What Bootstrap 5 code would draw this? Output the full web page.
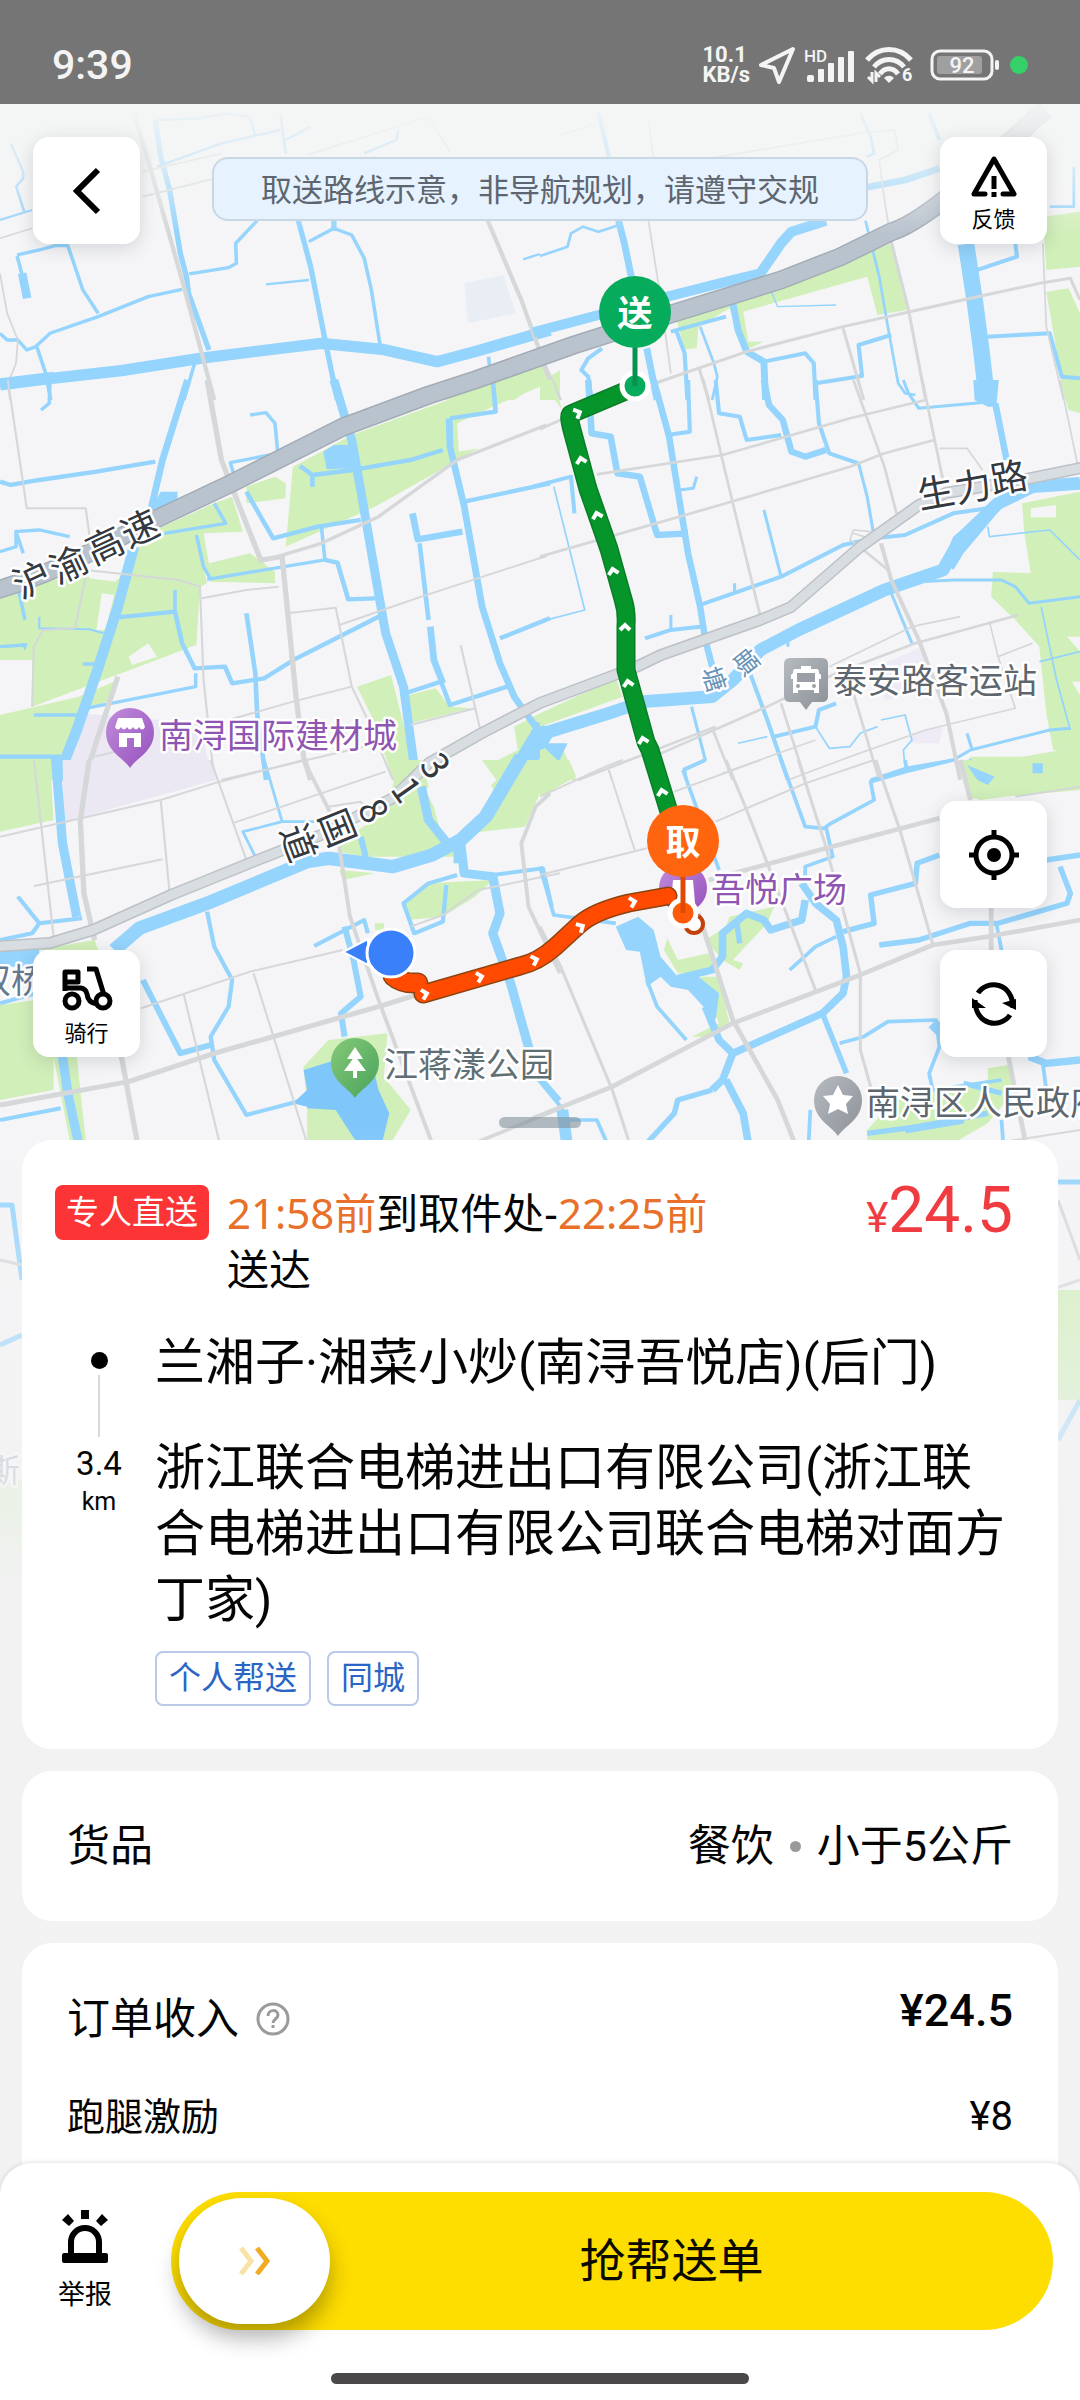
<!DOCTYPE html>
<html lang="zh-CN">
<head>
<meta charset="utf-8">
<meta name="viewport" content="width=device-width, initial-scale=1">
<title>抢帮送单</title>
<link rel="stylesheet" href="https://cdn.jsdelivr.net/npm/bootstrap@5.3.0/dist/css/bootstrap.min.css">
<style>
:root{--gutter:22px}
body{font-family:Roboto,"Noto Sans CJK SC",sans-serif;background:#f2f2f3;color:#050505}
.screen{min-height:100vh;overflow:hidden}
.status-bar{height:104px;background:#757575;color:#f4f4f4;padding:25px 52px 0}
.clock{font-size:41px;line-height:48px;font-weight:500}
.net-rate{font-size:22px;line-height:20px;font-weight:700}
.map-canvas{top:104px;left:0;width:100%;height:1496px;z-index:0}
.map-zone{height:1036px;padding:33px 33px 83px;z-index:1}
.float-btn{width:107px;height:107px;border:0;border-radius:16px;background:#fff;color:#000;box-shadow:0 4px 18px rgba(40,50,60,.16);font-size:22px;line-height:28px;padding:0}
.float-btn.flex-column{padding-top:6px}
.side-stack{gap:42px}
.route-tip{width:656px;height:64px;margin-top:20px;padding-top:4px;border:2px solid #c9d7e4;border-radius:16px;background:#e6f2fe;color:#5d6670;font-size:31px}
.grabber{width:82px;height:11px;border-radius:6px;background:rgba(130,145,155,.6);bottom:12px;left:50%;transform:translateX(-50%)}
.sheet{padding:0 var(--gutter);gap:22px;z-index:1}
.panel{background:#fff;border-radius:30px;padding:0 45px}
.panel-order{padding:45px 33px 43px}
.tag-direct{background:#fd3436;color:#fff;border-radius:8px;font-size:33px;line-height:55px;padding:0 11px}
.deadline{font-family:"Noto Sans","Noto Sans CJK SC",sans-serif;font-size:42px;line-height:56px;width:520px;margin-left:18px}
.deadline b{font-weight:400;color:#e8702a}
.price{color:#f03c40;font-size:64px;line-height:52px;margin-right:12px}
.price small{font-size:42px}
.stops{margin-top:33px}
.rail{width:88px;padding-top:22px}
.rail-dot{width:17px;height:17px;border-radius:50%;background:#000}
.rail-line{width:2px;height:62px;background:#d9d9d9;margin:6px 0 8px}
.dist{font-size:33px;line-height:38px}
.dist-unit{font-size:25px;line-height:38px}
.stop-text{margin:0 12px}
.stop-name{font-size:50px;line-height:66px;margin:0;font-weight:400}
.stop-name + .stop-name{margin-top:39px}
.stop-tag{font-size:32px;line-height:51px;padding:0 12px;border:2px solid #b9cae8;border-radius:8px;color:#2a65c6}
.tags{gap:16px;margin-top:18px}
.row-goods{height:150px;font-size:43px}
.sep{width:11px;height:11px;border-radius:50%;background:#999;margin:0 16px}
.row-total{font-size:43px;line-height:66px;padding-top:43px}
.row-total span:last-child{font-size:45px;font-weight:500;margin-top:-8px}
.row-bonus{font-size:38px;line-height:56px;margin-top:37px;padding-bottom:30px}
.row-bonus span:last-child{font-size:40px}
.panel-income{border-radius:30px 30px 0 0}
.dock{background:#fff;border-radius:32px 32px 0 0;margin-top:-24px;padding:29px 27px 16px 45px;box-shadow:0 -1px 4px rgba(0,0,0,.12);z-index:2}
.report{border:0;background:none;width:80px;font-size:27px;line-height:36px;padding:17px 0 0;color:#000}
.report svg{margin-bottom:14px}
.slide-track{height:138px;border:0;border-radius:69px;background:#fedd00;font-size:46px;margin-left:46px;padding:0 8px;color:#0a0a00}
.slide-knob{width:151px;height:126px;border-radius:63px;background:#fff;box-shadow:0 14px 22px rgba(0,0,0,.3)}
.slide-label{padding-right:32px}
.home-bar{width:418px;height:11px;border-radius:6px;background:#4a4849;margin:43px 0 0 -18px}
.gn{fill:#d1efb9}.wt{fill:none;stroke:#94d4fd;stroke-linejoin:round}.wf{fill:#94d4fd}
.rd{fill:none;stroke:#d5d7d8;stroke-linejoin:round}.vi{fill:#ebe8f3}.ld{fill:#f5f5f7}
.lbl{font:400 34px "Noto Sans CJK SC",sans-serif;paint-order:stroke;stroke:#fff;stroke-width:5px;stroke-linejoin:round}
.rl{font-size:37px;fill:#33393f;text-anchor:middle}
.river{font-size:25px}.far{font-size:32px}
.pin-t{font:700 35px "Noto Sans CJK SC",sans-serif;fill:#fff;text-anchor:middle}
</style>
<script src="https://cdn.jsdelivr.net/npm/bootstrap@5.3.0/dist/js/bootstrap.bundle.min.js"></script>
</head>
<body>
<div class="screen position-relative d-flex flex-column">

<header class="status-bar d-flex align-items-center justify-content-between flex-shrink-0">
  <div class="clock">9:39</div>
  <div class="d-flex align-items-center">
    <div class="net-rate">10.1<br>KB/s</div>
    <svg class="ms-2" width="38" height="40" viewBox="0 0 38 40" fill="none" stroke="#f4f4f4" stroke-width="4" stroke-linejoin="round"><path d="M35 4 3 20l13 3 5 14z"/></svg>
    <svg class="ms-2" width="52" height="38" viewBox="0 0 52 38" fill="#f4f4f4"><text x="0" y="16" font-size="17" font-weight="500" font-family="Roboto">HD</text><rect x="3" y="29" width="7" height="7" rx="2"/><rect x="14" y="23" width="6" height="13" rx="1"/><rect x="24" y="17" width="6" height="19" rx="1"/><rect x="34" y="11" width="6" height="25" rx="1"/><rect x="44" y="5" width="6" height="31" rx="1"/></svg>
    <svg class="ms-2" width="54" height="42" viewBox="0 -2 54 42" fill="none" stroke="#f4f4f4" stroke-width="5"><path d="M3 14C15 0 35 0 47 14M10 21c8-10 22-10 30 0"/><path d="M16 28c5-7 13-7 18 0"/><path d="m20 32c3-3 7-3 10 0l-5 5z" fill="#f4f4f4" stroke="none"/><path d="M4 31l4 4v-9M12 36v-9l4 4" stroke-width="3"/><text x="38" y="35" font-size="18" font-weight="700" font-family="Roboto" fill="#f4f4f4" stroke="none">6</text></svg>
    <svg class="ms-2 ps-1" width="74" height="32" viewBox="0 0 70 32"><rect x="2" y="2" width="60" height="28" rx="8" fill="none" stroke="#f4f4f4" stroke-width="3"/><rect x="7" y="7" width="45" height="18" rx="3" fill="#a0a0a0"/><rect x="65" y="11" width="4" height="10" rx="2" fill="#f4f4f4"/><text x="32" y="24" text-anchor="middle" font-size="22" font-weight="500" font-family="Roboto" fill="#f4f4f4">92</text></svg>
    <svg class="ms-2" width="20" height="20" viewBox="0 0 20 20"><circle cx="11" cy="10" r="9" fill="#35d168"/></svg>
  </div>
</header>

<svg class="map-canvas position-absolute" viewBox="0 104 1080 1496" preserveAspectRatio="xMidYMin slice" role="img" aria-label="取送路线地图">
<defs>
  <linearGradient id="fadeTop" x1="0" y1="0" x2="0" y2="1"><stop offset="0" stop-color="#f4f5f5" stop-opacity=".95"/><stop offset=".5" stop-color="#f4f5f5" stop-opacity=".65"/><stop offset="1" stop-color="#f4f5f5" stop-opacity="0"/></linearGradient>
  <linearGradient id="fadeBot" x1="0" y1="0" x2="0" y2="1"><stop offset="0" stop-color="#f2f2f3" stop-opacity="0"/><stop offset="1" stop-color="#f2f2f3"/></linearGradient>
  <linearGradient id="pv" x1="0" y1="0" x2="1" y2="1"><stop offset="0" stop-color="#c08ddb"/><stop offset="1" stop-color="#9650bd"/></linearGradient>
  <linearGradient id="pg" x1="0" y1="0" x2="1" y2="1"><stop offset="0" stop-color="#86c979"/><stop offset="1" stop-color="#48a35a"/></linearGradient>
  <linearGradient id="ps" x1="0" y1="0" x2="1" y2="1"><stop offset="0" stop-color="#b6bbc0"/><stop offset="1" stop-color="#8b9197"/></linearGradient>
  <path id="drop" d="M0 36C-6 26-24 20-24 0a24 24 0 0 1 48 0C24 20 6 26 0 36z"/>
  <path id="chev" d="M-5 3 0-2l5 5" fill="none" stroke="#fff" stroke-width="4"/>
</defs>
<rect y="104" width="1080" height="1496" fill="#f5f5f7"/>

<!-- north west -->
<g transform="translate(0 100) scale(.3571 .3333)">
  <path class="gn" d="M1200 900L1520 785 1568 900V810L1440 900z"/>
  <path d="M1300 550L1410 525 1445 640 1310 670z" fill="#e9eef5"/>
  <path class="wt" stroke-width="34" d="M0 855L120 838 340 812 560 775 900 730 1070 748 1225 785 1330 755 1540 690"/>
  <path class="wt" stroke-width="15" d="M435 60L450 170 475 270 505 460 522 530 528 580 565 690 585 750M835 360L870 500 912 730 945 900M935 360V390"/>
  <path class="wt" stroke-width="24" d="M62 520L76 595"/>
  <path class="wt" stroke-width="10" d="M48 468L62 525M48 465L110 450 155 437 190 437 232 570 275 640M0 700L20 720 50 720 75 750 100 740 140 700 275 650 415 590 510 568M103 740L128 820 142 900M545 790L515 900M530 522L640 503 662 490 660 430 720 362M865 425L935 385 985 405 1020 475 1040 570 1065 740M1368 770L1382 900"/>
  <path class="wt" stroke-width="7" d="M30 130L65 215 65 235 45 260 68 335M0 360L90 330M745 553L865 540M1465 478L1512 462M440 200L620 130 785 90M785 40L800 160M800 120L870 80M440 60L560 55 630 40 700 50 715 105M1115 90L1110 120 1020 160"/>
  <path class="rd" stroke-width="12" d="M375 40L420 200 515 560 600 900M1365 360L1460 600 1510 750 1540 860"/>
  <path class="rd" stroke-width="5" d="M400 215L620 160M400 290L620 230M0 415L90 385M0 520L20 640 50 720 45 790 22 850 28 900M1200 50L1260 155M860 165L1200 50"/>
</g>
<!-- north east -->
<g transform="translate(540 100) scale(.3444 .3333)">
  <path class="gn" d="M395 655L960 455 1020 430 1065 630 980 645 950 530 590 635 605 725 650 725 600 748 550 625 460 680 455 745 420 748zM1460 350L1568 335V500L1470 510zM1470 575L1535 565 1568 640V900H1525zM0 790L50 900H0z"/>
  <path class="wt" stroke-width="30" d="M-20 697L170 645 370 590 560 540 640 520 700 430 730 395 830 362"/>
  <path class="wt" stroke-width="48" d="M1237 432L1262 600 1280 740 1298 900"/>
  <path class="wt" stroke-width="20" d="M950 262L1060 240 1160 205M228 362L245 430 265 530M310 745L340 900M560 610L575 690 600 755 650 785 655 900"/>
  <path class="wt" stroke-width="12" d="M1130 40L1160 120M170 40L200 170M180 745L140 775 120 810 140 830 150 900M380 695L540 650M395 690L420 760 428 900M650 785L770 760 795 790 800 900M800 850L935 828 925 735 1020 705M1270 510L1385 470 1380 430M1300 710L1480 700 1515 830 1568 835"/>
  <path class="wt" stroke-width="8" d="M0 468L80 440 90 400 125 380 170 395 230 375M465 680L505 790 515 830 500 900M945 362L985 530 1010 680 1040 850 1060 880 1090 885M950 170L970 160 960 110 930 40M1480 320H1550V200"/>
  <path class="wt" stroke-width="4" d="M670 570L690 620 860 615"/>
  <path class="rd" stroke-width="9" d="M1020 425L1070 630 1120 900M320 855L600 755 880 680 1250 595 1460 548 1540 535 1568 600M880 685L940 900M462 805L490 900M0 760L60 900"/>
  <path class="rd" stroke-width="5" d="M315 60L330 175M315 362L345 560 380 820M60 105L150 75M490 175L940 98 1030 90 1040 150 985 180 1000 300 1020 425M1460 430L1470 680 1520 900"/>
</g>
<!-- west -->
<g transform="translate(0 380) scale(.3571 .3333)">
  <path class="gn" d="M985 165L1370 15 1512 0 1512 20 1380 80 1280 130 1285 215 1340 205 1200 290 1050 380 800 500 820 260 900 215zM690 320L770 290 800 310 800 355 690 370zM380 510L480 470 550 465 580 610 560 620 550 795 90 980 90 840 0 840 0 650 240 570 330 600zM445 445L600 370 650 350 680 455 570 460 585 550 700 520 770 575 770 610 590 605 550 475 380 510zM0 1005L220 950 330 900 310 960 240 990 170 1200 0 1200zM1000 920L1095 885 1170 1200 1100 1200 1050 1030zM1145 945L1220 925 1260 980 1320 985 1150 1030zM1512 1000L1440 1040 1450 1110 1340 1170 1340 1200 1512 1200z"/>
  <path class="ld" d="M285 640L320 645 295 750 270 750zM360 830L415 790 440 830 370 855zM240 570L330 580 325 605 250 595z"/>
  <path class="vi" d="M225 1000L560 1030 595 1200 175 1200z"/>
  <path class="wt" stroke-width="30" d="M0 10L150-10M375 500L330 680 270 880 215 1050 160 1200"/>
  <path class="wt" stroke-width="25" d="M935 0L985 180 1010 330 1060 640 1080 760 1130 920 1165 1200"/>
  <path class="wt" stroke-width="19" d="M525 0L490 120 455 240 420 400M1258 115L1260 200 1300 380 1350 680 1400 850 1440 950 1500 1040M1155 400L1170 478 1295 455M1205 740L1215 840 1240 910"/>
  <path class="wt" stroke-width="60" d="M1530 1040L1490 1110 1440 1200"/>
  <path class="wf" d="M415 400L450 335H497V370L470 385zM905 215L935 195H990V265L915 268zM60 790h18l-8 22z"/>
  <path class="wt" stroke-width="13" d="M0 305L30 315 110 300 270 275 435 245M690 335L730 410 765 475 890 440 1010 420M840 258L875 285 990 270 1150 240 1240 210M875 320V285M1380 0L1388 95 1260 115M1300 365L1540 310M1400 775L1540 715M910 540L945 548 975 658 1050 655M1175 490L1200 720M1135 940L1235 905 1260 975 1420 920M330 712L490 695 510 790 545 865 630 860 650 910 740 895 830 835 1070 705M690 700L715 880 720 1000 745 1200M0 1130H170"/>
  <path class="wt" stroke-width="10" d="M140 0L138 70 115 90M40 455L110 450 195 470M0 515L45 500 45 455 65 520M50 620L70 720M700 105L745 98 770 130 778 220 645 248 655 285M900 440L910 540 580 598M550 465L570 560 590 598M600 370L632 430 460 460M490 695V630M548 880V920L240 985M95 1005H215M0 800L70 795M232 852H270"/>
  <path class="wt" stroke-width="6" d="M110 710V745L250 748 290 760"/>
  <path class="rd" stroke-width="15" d="M580 0L620 240 660 350 730 540 790 530 830 960 850 1130 870 1200M330 890L235 1200"/>
  <path class="rd" stroke-width="10" d="M730 545L900 490 1060 410 1280 240 1530 135"/>
  <path class="rd" stroke-width="6" d="M22 0L75 385 240 385 255 500M240 570L500 600 560 620 570 900 600 1200M565 655L690 630 780 620M240 590L210 745M90 980L95 800 120 750 210 745M805 700L940 683 985 920 1030 1020 1100 1200M950 735L1180 650 1530 528M640 1020L820 965 985 920M1290 795L1345 1050M1150 1035L1330 985M620 1200L1100 1080M265 1130L420 1090"/>
</g>
<!-- east -->
<g transform="translate(540 380) scale(.3444 .3333)">
  <path class="gn" d="M1400 370L1568 335V1120L1490 1110 1470 1000 1450 800 1380 720 1310 650 1315 575 1425 580 1405 450zM1240 1200L1250 1130 1400 1130 1568 1100V1200zM0 1000L220 895 240 950 0 1040zM0 1110L60 1090 105 1200H0zM1510 0H1568V100L1535 90zM0 0H35L65 90z"/>
  <path class="ld" d="M1425 385L1498 375V412H1425zM1530 770H1568V815zM1545 905H1568V945z"/>
  <path d="M1000 850L1110 800 1130 930 1000 960zM1080 1060L1170 1040 1160 1090 1080 1090z" fill="#efebf6"/>
  <path class="wt" stroke-width="38" d="M-20 1070L200 1000 300 965 500 950 560 900 640 810 750 750 1000 630 1170 570 1220 480 1330 370 1430 320 1568 310"/>
  <path class="wf" d="M1170 540L1200 470 1300 380 1360 360 1230 520 1200 570zM0 1090H80L55 1145zM1258 0H1332L1325 80H1300L1262 60z"/>
  <path class="wt" stroke-width="19" d="M1322 70L1355 240M140 0L150 160 205 170 225 280 290 290 340 465 430 460M330 0L375 170 400 330 430 520 465 680 480 780 500 860M650 0L665 75 705 120 730 215 770 230 830 210"/>
  <path class="wt" stroke-width="12" d="M-20 320L90 290 100 400M430 0L435 155 370 165M510 0L520 100 580 110 600 180 700 165M800 0L810 130 840 220 925 250M465 675L700 590 880 495 970 475 1060 465 1200 400 1300 385M305 775L380 750 465 740M680 1070L800 1040 810 990 860 970M610 880L660 1020 720 1200"/>
  <path class="wt" stroke-width="9" d="M925 250L950 350 970 470M455 290L445 325 405 330M1055 0L1070 40 1100 85 1310 65M650 390L700 590M380 705V750M565 610V640M720 775V800M1100 605L1200 600 1340 600 1380 620 1420 670 1568 650M1020 640L1080 790M440 980L480 1140 420 1170 425 1200M960 1200L1060 1165 1200 1140 1250 1110 1480 1050 1540 1045M1240 1060L1255 1110"/>
  <path class="wt" stroke-width="5" d="M0 725L130 690 40 320M1300 440L1305 470 1480 450 1568 540M1455 680L1500 900 1540 1050M1450 845L1568 815M575 1090L660 1070M800 1040L840 1105 900 1100 930 1060 980 1040M990 1020L1060 1005 1080 1080 1055 1110 1060 1160"/>
  <path class="wf" d="M1245 1135L1275 1150 1320 1180 1290 1200H1250zM1430 1150h30v30h-30z"/>
  <path class="rd" stroke-width="12" d="M990 490L1020 600 1100 780 1180 1000 1220 1200"/>
  <path class="rd" stroke-width="8" d="M475 0L525 220 560 370 640 710M910 0L1000 260 1035 400M1110 0L1150 200 1170 300M165 283L530 225 900 115 1120 60M0 530L540 370 900 260 1000 220 1145 180M0 148L70 115M330 1130L660 980 860 880 1090 790 1390 705M500 1045L560 1200M700 970L770 1200M910 940L985 1200M110 1200L510 1040M940 510L1010 570"/>
  <path class="rd" stroke-width="5" d="M1160 205H1240L1285 270M1510 0L1560 250M840 860L1080 740 1220 710M960 455L910 450 900 480 930 500 940 470 910 460M1305 725L1330 830 1380 985 1120 1050 900 1130 720 1200M1330 830L1430 790M530 1180L800 1080M200 1170L208 1200"/>
</g>
<!-- south west -->
<g transform="translate(0 760) scale(.3571 .3333)">
  <path class="gn" d="M0 0H140L150 180 0 215zM0 735L100 720 150 720V990L0 1020zM1110 0H1180L1240 240 1300 290H1020L950 275 945 250 1090 150zM1330 0H1512V100L1470 200 1310 220 1400 120zM950 330L1050 340 960 360zM1140 480L1130 430 1200 370 1380 360 1330 410 1240 470zM920 840L1085 820 1075 950 1150 1050 1100 1140H860V1040L850 920zM100 570L265 540 275 570zM150 890L215 890 240 1140H195zM1050 490h25v20h-25z"/>
  <path class="vi" d="M175 0H590L605 60 180 185z"/>
  <path class="ld" d="M1190 90L1290 0H1350L1390 60 1330 120 1280 130 1280 200 1250 210z"/>
  <path class="wt" stroke-width="40" d="M320 570L390 505 580 430 860 305 920 295 1100 320 1210 285 1290 240 1360 170 1460-10"/>
  <path class="wt" stroke-width="60" d="M0 590H110M1270 280H1300"/>
  <path class="wt" stroke-width="26" d="M155-10L175 250 215 470M1180 80L1200 180 1260 260M1290 250L1300 340 1380 350 1400 460 1380 520 1430 670 1485 880M175 890L190 1000 220 1150"/>
  <path class="wt" stroke-width="17" d="M965 500L990 600 1010 710 955 760 965 830M400 660L505 880 590 855M1010 230L1025 295"/>
  <path class="wt" stroke-width="12" d="M230 475L110 490 50 410M110 490L90 520 0 540M1380 345L1520 325 1545 440M1280 345L1200 370 1130 430 1160 520 1240 485 1250 375M580 455L600 560 650 660 640 740 590 830 600 900 690 1065 850 1020M880 558L1020 480 1030 520M0 1080L170 1045M1520 960L1568 1020M0 730L100 700"/>
  <path class="wt" stroke-width="8" d="M740 0L790 185 680 215 715 290M790 185H880"/>
  <path d="M850 930L940 900H1040L1060 990 1090 1060 1070 1150H1000L940 1050 860 1045V1075 1040L820 1030 860 990z" fill="#7fc6fb"/>
  <path class="rd" stroke-width="15" d="M250 0L225 180 235 400 265 540M340 890L385 1150M0 1035L360 965 600 880 1060 740 1180 700"/>
  <path class="rd" stroke-width="11" d="M850 0L940 190 980 470 1060 720 1210 1150M1540 100L1500 140 1460 250 1480 440 1568 640M1340 1145L1568 1045"/>
  <path class="rd" stroke-width="6" d="M0 230L450 120 600 70 850 0M450 120L475 400M95 0L150 530M95 378L455 298M590 0L690 300M650 190L1080 35M920 140L1010 125 1030 150M395 745L700 635 960 570M515 705L615 1150M710 640L860 1150M1150 500L1240 465 1340 390 1568 340"/>
</g>
<!-- south east -->
<g transform="translate(540 760) scale(.3444 .3333)">
  <path class="gn" d="M0 0H85L105 50 0 110zM1225 0H1568V90L1350 110 1280 120 1240 110zM370 535L400 600 490 580 510 640 400 640 360 570zM465 650L520 650 550 790 480 830 440 830 520 790zM480 540L540 500 550 470 680 440 660 490 560 600 590 610 580 630 530 600zM950 1110L1030 1020 1300 960 1300 925 1360 915 1380 990 1300 1090 1200 1150 950 1150z"/>
  <path class="wf" d="M220 500L285 470 330 510 350 590 400 650 460 650 520 700 510 780 430 690 380 680 350 650 310 680 290 575 250 570zM1240 15L1320 50 1300 75 1270 60zM1430 10h30v30h-30z"/>
  <path class="wt" stroke-width="22" d="M400 655L500 630 530 590 530 520 600 460 650 480 670 510 760 480 770 420M760 370L800 430 860 480 880 560 890 650 880 700 820 760 560 880 530 960 500 990M480 740L520 840 560 880M540 960L590 1060 605 1150M1420 890L1470 910 1568 900M1060 1110L1230 1080"/>
  <path class="wt" stroke-width="16" d="M500 990L400 1020 390 1060 310 1150M880 515L970 490 960 405 1090 370 1095 310 1160 285M820 760L890 940M985 555L1100 540 1250 490 1330 490 1530 430 1540 400 1510 320M1470 300L1568 285M950 1120L1100 1100 1300 1060M1230 970L1340 1000M570 480L580 550"/>
  <path class="wt" stroke-width="11" d="M0 320L40 465 220 490M310 660L340 740 425 840M700 0L770 200 825 205 845 190 970 120 960 65 1060 35 1200 0M830 200L850 290 770 320 770 370M725 630L800 560 860 530M1325 490L1340 570M870 850L940 830 1010 785 1150 780 1160 860 1130 940 1140 990 1340 960M1460 910L1470 990M1340 1080L1345 1150M780 1150L785 1050M415 30L520 330M1060 0L1065 30M415 30L480 0M-20 940L60 1040 80 1080 165 1080 195 1150"/>
  <path class="wt" stroke-width="34" d="M65 1050L78 1150M1140 790L1180 830"/>
  <path class="rd" stroke-width="14" d="M460 460L560 780 690 1020 740 1150M-20 1075L210 980 560 790 930 645 1140 555 1300 530 1568 480M490 360L830 265 1160 175M1310 440V570M1360 890L1410 1150M1220 0L1250 120"/>
  <path class="rd" stroke-width="9" d="M540 0L600 150 660 310 800 690M750 0L830 260 930 640 930 870 960 980M975 0L1045 210 1140 550M0 500L60 620 210 990 260 1150"/>
  <path class="rd" stroke-width="6" d="M0 345L310 265M200 30L275 270M390 95L640 0M510 185L770 70 970 0M0 110L190 20 240 0M1350 1145L1568 1110M1380 110L1568 80"/>
</g>
<!-- strip under the sheet edges -->
<path class="gn" d="M1058 1290H1080V1400H1058zM0 1480H22V1620H0z"/>
<path class="wt" stroke-width="5" d="M0 1205H12L22 1280M0 1345 22 1335M1080 1182H1050M1080 1400 1058 1440"/>
<path class="rd" stroke-width="3" d="M1058 1200 1080 1260M1050 1290 1080 1280M0 1260 22 1265"/>

<!-- trunk roads -->
<g fill="none" stroke-linejoin="round">
  <path d="M1045 110L1000 150 Q970 180 940 203T891 232L840 257 781 280 671 314 574 345 475 380 429 395 343 427 232 483 154 520 89 553Q40 578-10 592" stroke="#a3acb6" stroke-width="19"/>
  <path d="M1045 110L1000 150 Q970 180 940 203T891 232L840 257 781 280 671 314 574 345 475 380 429 395 343 427 232 483 154 520 89 553Q40 578-10 592" stroke="#b9c3ce" stroke-width="16"/>
  <path d="M1090 466L1022 480 946 493 919 505 860 547 791 607 760 620 661 655 636 667 540 703 482 733 429 763 393 798 321 835 250 863 171 895 93 930 50 943-10 947" stroke="#bcc1c6" stroke-width="12"/>
  <path d="M1090 466L1022 480 946 493 919 505 860 547 791 607 760 620 661 655 636 667 540 703 482 733 429 763 393 798 321 835 250 863 171 895 93 930 50 943-10 947" stroke="#d8dde2" stroke-width="9"/>
</g>

<!-- place labels -->
<g class="lbl">
  <g class="rl">
    <text transform="translate(32 580) rotate(-25)" y="13">沪</text><text transform="translate(69 565) rotate(-25)" y="13">渝</text><text transform="translate(105 546) rotate(-25)" y="13">高</text><text transform="translate(140 529) rotate(-25)" y="13">速</text>
    <text transform="translate(936 493) rotate(-10)" y="13">生</text><text transform="translate(973 487) rotate(-10)" y="13">力</text><text transform="translate(1009 478) rotate(-10)" y="13">路</text>
    <text transform="translate(435 766) rotate(55)" y="13">3</text><text transform="translate(406 790) rotate(55)" y="13">1</text><text transform="translate(373 811) rotate(62)" y="13">8</text><text transform="translate(337 828) rotate(68)" y="13">国</text><text transform="translate(298 843) rotate(70)" y="13">道</text>
  </g>
  <g class="river" fill="#6893b8" text-anchor="middle"><text transform="translate(746 662) rotate(52)" y="9">頔</text><text transform="translate(714 679) rotate(72)" y="9">塘</text></g>
  <text x="159" y="748" fill="#8f55b2">南浔国际建材城</text>
  <text x="833" y="693" fill="#5d666e">泰安路客运站</text>
  <text x="384" y="1077" fill="#5f6f74">江蒋漾公园</text>
  <text x="711" y="902" fill="#8f55b2">吾悦广场</text>
  <text x="866" y="1115" fill="#5d666e">南浔区人民政府</text>
  <text x="-23" y="993" fill="#66788e">双桥</text>
  <text x="-12" y="1482" fill="#98a5b5" class="far">斯</text>
</g>

<!-- poi pins -->
<g transform="translate(130 732)"><use href="#drop" fill="url(#pv)"/><path d="M-12-14h24l3 9q-3 5-6 0-3 5-6 0-3 5-6 0-3 5-6 0-3 5-6 0zM-11 1h22v14H4V6h-7v9h-8z" fill="#fff"/></g>
<g transform="translate(806 680)"><path d="M-16-22h32q6 0 6 6v32q0 6-6 6H6l-6 8-6-8h-10q-6 0-6-6v-32q0-6 6-6z" fill="url(#ps)"/><path d="M-5-14H5v3h6q2 0 2 4l2 2v4h-2v14H8v-3H-8v3h-5V-1h-2v-4l2-2q0-4 2-4h6z" fill="#fff"/><path d="M-9-7H9V2H-9z" fill="#9aa0a6"/><circle cx="-8" cy="6" r="2" fill="#9aa0a6"/><circle cx="8" cy="6" r="2" fill="#9aa0a6"/></g>
<g transform="translate(355 1062)"><use href="#drop" fill="url(#pg)"/><path d="M0-15 8-3H-8zM0-6 11 9H2v7h-4V9h-9z" fill="#fff"/></g>
<g transform="translate(838 1100)"><use href="#drop" fill="url(#ps)"/><path d="M0-15 5-5 15-4 8 4 10 14 0 9-10 14-8 4-15-4-5-5z" fill="#fff"/></g>
<circle cx="683" cy="888" r="24" fill="url(#pv)"/><path d="M673 880h20l3 34h-26z" fill="#fff"/>

<!-- delivery leg -->
<g fill="none" stroke-linejoin="round">
  <path d="M635 387L571 414Q568 415 572 430L588 489 609 549 623 599Q627 611 626 626V670L638 713 646 742 650 750 670 815" stroke="#0a7d28" stroke-width="19"/>
  <path d="M635 387L571 414Q568 415 572 430L588 489 609 549 623 599Q627 611 626 626V670L638 713 646 742 650 750 670 815" stroke="#06952b" stroke-width="16"/>
  <path d="M393 976Q402 984 418 983" stroke="#8c4310" stroke-width="21" stroke-linecap="round"/>
  <path d="M423 994L520 966Q538 962 555 947L580 924Q595 911 629 903L668 896" stroke="#8c4310" stroke-width="19" stroke-linecap="round"/>
  <path d="M393 976Q402 984 418 983" stroke="#ff4a00" stroke-width="18" stroke-linecap="round"/>
  <path d="M423 994L520 966Q538 962 555 947L580 924Q595 911 629 903L668 896" stroke="#ff4a00" stroke-width="16" stroke-linecap="round"/>
</g>
<use href="#chev" transform="translate(578 413) rotate(65)"/><use href="#chev" transform="translate(581 460) rotate(-12)"/><use href="#chev" transform="translate(597 515) rotate(-15)"/><use href="#chev" transform="translate(613 571) rotate(-12)"/><use href="#chev" transform="translate(625 627)"/><use href="#chev" transform="translate(628 683) rotate(-10)"/><use href="#chev" transform="translate(643 740) rotate(-12)"/><use href="#chev" transform="translate(662 792) rotate(-12)"/>
<use href="#chev" transform="translate(425 994) rotate(76)"/><use href="#chev" transform="translate(480 977) rotate(76)"/><use href="#chev" transform="translate(535 960) rotate(72)"/><use href="#chev" transform="translate(581 927) rotate(60)"/><use href="#chev" transform="translate(633 902) rotate(76)"/>
<path d="M343 952l25-13v26z" fill="#3a80fb" stroke="#fff" stroke-width="2"/><circle cx="391" cy="953" r="24" fill="#3a80fb" stroke="#fff" stroke-width="3"/>

<circle cx="635" cy="386" r="13" fill="#06ab5c" stroke="#fff" stroke-width="5"/><path d="M635 340V386" stroke="#089150" stroke-width="5"/><circle cx="635" cy="312" r="36" fill="#06ab5c"/><text class="pin-t" x="635" y="326">送</text>
<circle cx="694" cy="924" r="9" fill="#fff" stroke="#c2410c" stroke-width="4"/><circle cx="683" cy="913" r="13" fill="#ff5a0a" stroke="#fff" stroke-width="5"/><path d="M683 875V913" stroke="#e14a05" stroke-width="5"/><circle cx="683" cy="841" r="36" fill="#ff640f"/><text class="pin-t" x="683" y="855">取</text>

<rect y="104" width="1080" height="130" fill="url(#fadeTop)"/>
<rect y="1120" width="1080" height="480" fill="url(#fadeBot)"/>
</svg>

<section class="map-zone position-relative d-flex flex-column justify-content-between flex-shrink-0">
  <div class="d-flex justify-content-between align-items-start">
    <button type="button" class="float-btn d-flex align-items-center justify-content-center" aria-label="返回"><svg width="40" height="50" viewBox="0 0 40 50" fill="none" stroke="#000" stroke-width="6"><path d="M31 4 10 25l21 21"/></svg></button>
    <div class="route-tip d-flex align-items-center justify-content-center">取送路线示意，非导航规划，请遵守交规</div>
    <button type="button" class="float-btn d-flex flex-column align-items-center justify-content-center"><svg class="mb-2" width="50" height="44" viewBox="0 0 50 44" fill="none" stroke="#000" stroke-width="5" stroke-linejoin="round" stroke-linecap="round"><path d="M16 40H5L25 5l20 35H34"/><path d="M25 22v13M25 38v5" stroke-linecap="butt"/></svg>反馈</button>
  </div>
  <div class="d-flex justify-content-between align-items-end">
    <button type="button" class="float-btn d-flex flex-column align-items-center justify-content-center"><svg class="mb-2" width="54" height="46" viewBox="0 0 54 46" fill="none" stroke="#000" stroke-width="5"><circle cx="12" cy="35" r="7"/><circle cx="43" cy="35" r="7"/><path d="M5 6h13v10H5zM5 14V25M27 3h9l8 26M5 22h16q5 1 6 6 1 9 10 10" stroke-linejoin="round"/></svg>骑行</button>
    <div class="side-stack d-flex flex-column">
      <button type="button" class="float-btn d-flex align-items-center justify-content-center" aria-label="定位"><svg width="52" height="52" viewBox="0 0 52 52"><circle cx="26" cy="26" r="18" fill="none" stroke="#000" stroke-width="5"/><circle cx="26" cy="26" r="7"/><path d="M26 1v8M26 43v8M1 26h8M43 26h8" stroke="#000" stroke-width="5"/></svg></button>
      <button type="button" class="float-btn d-flex align-items-center justify-content-center" aria-label="刷新"><svg width="50" height="50" viewBox="0 0 50 50" fill="none" stroke="#000" stroke-width="5"><path d="M9 14C18 0 44 3 44 29M41 36C32 50 6 47 6 21"/><path d="M47 31 33 24l14-4zM3 19l14 10H3z" fill="#000" stroke="none"/></svg></button>
    </div>
  </div>
  <div class="grabber position-absolute"></div>
</section>

<main class="sheet position-relative d-flex flex-column flex-grow-1">
  <section class="panel panel-order">
    <div class="d-flex align-items-start">
      <span class="tag-direct flex-shrink-0">专人直送</span>
      <div class="deadline"><b>21:58前</b>到取件处-<b>22:25前</b><br>送达</div>
      <div class="price ms-auto text-nowrap"><small>¥</small>24.5</div>
    </div>
    <div class="stops d-flex">
      <div class="rail d-flex flex-column align-items-center flex-shrink-0">
        <span class="rail-dot"></span><span class="rail-line"></span>
        <span class="dist">3.4</span><span class="dist-unit">km</span>
      </div>
      <div class="stop-text">
        <h1 class="stop-name">兰湘子·湘菜小炒(南浔吾悦店)(后门)</h1>
        <h2 class="stop-name">浙江联合电梯进出口有限公司(浙江联合电梯进出口有限公司联合电梯对面方丁家)</h2>
        <div class="tags d-flex"><span class="stop-tag">个人帮送</span><span class="stop-tag">同城</span></div>
      </div>
    </div>
  </section>
  <section class="panel row-goods d-flex align-items-center justify-content-between">
    <span>货品</span>
    <span class="d-flex align-items-center">餐饮<i class="sep"></i>小于5公斤</span>
  </section>
  <section class="panel panel-income flex-grow-1">
    <div class="row-total d-flex justify-content-between">
      <span class="d-flex align-items-center">订单收入<svg class="ms-3" width="36" height="36" viewBox="0 0 36 36" fill="none" stroke="#9b9b9b" stroke-width="3"><circle cx="18" cy="18" r="15"/><path d="M13 15c0-7 10-7 10-1 0 4-5 4-5 8M18 24v3"/></svg></span>
      <span>¥24.5</span>
    </div>
    <div class="row-bonus d-flex justify-content-between"><span>跑腿激励</span><span>¥8</span></div>
  </section>
</main>

<footer class="dock position-relative flex-shrink-0">
  <div class="d-flex align-items-start">
    <button type="button" class="report d-flex flex-column align-items-center flex-shrink-0"><svg width="46" height="54" viewBox="0 0 46 54"><path d="M0 46q0-2 2-2h4V33a17 17 0 0 1 34 0v11h4q2 0 2 2v6q0 2-2 2H2q-2 0-2-2zM12 44h22V33a11 11 0 0 0-22 0z" fill-rule="evenodd"/><path d="M19 1h8v9h-8zM0 11l6-6 6 7-5 5zM46 11l-6-6-6 7 5 5z"/></svg>举报</button>
    <button type="button" class="slide-track flex-grow-1 d-flex align-items-center">
      <span class="slide-knob d-flex align-items-center justify-content-center flex-shrink-0"><svg width="34" height="28" viewBox="0 0 34 28" fill="none" stroke-width="5"><path d="M3 1l10 13L3 27" stroke="#f8e2a6"/><path d="M19 1l10 13-10 13" stroke="#efad22"/></svg></span>
      <span class="slide-label flex-grow-1 text-center">抢帮送单</span>
    </button>
  </div>
  <div class="d-flex justify-content-center"><div class="home-bar"></div></div>
</footer>
</div>
</body>
</html>
